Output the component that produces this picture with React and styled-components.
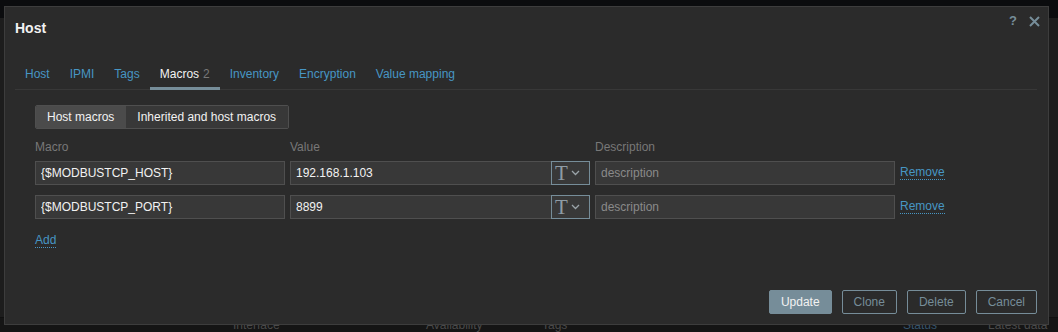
import React from "react";
import styled, { createGlobalStyle } from "styled-components";

const GlobalStyle = createGlobalStyle`
  html, body {
    margin: 0;
    padding: 0;
    background: #111213;
  }
  body {
    font-family: "Liberation Sans", Arial, sans-serif;
    font-size: 12px;
  }
`;

const Page = styled.div`
  position: relative;
  width: 1058px;
  height: 332px;
  overflow: hidden;
  background: #171717;
  display: flex;
  flex-direction: column;
`;

const TopBar = styled.div`
  height: 18px;
  background: #0b0c0e;
`;

const Behind = styled.div`
  height: 307px;
  background: #1d1d1d;
  border-bottom: 1px solid #101010;
  box-sizing: border-box;
`;

const TableHead = styled.div`
  display: flex;
  padding-left: 233px;
  line-height: 14px;
  background: #151515;
`;

const HeadCell = styled.span`
  width: ${(p) => p.$w}px;
  flex: none;
  color: ${(p) => (p.$sorted ? "#36546d" : "#4a4a4a")};
`;

const Dialog = styled.div`
  position: absolute;
  left: 4px;
  top: 6px;
  width: 1045px;
  height: 319px;
  box-sizing: border-box;
  background: #2b2b2b;
  border: 1px solid #3d3d3d;
  padding: 0 11px 10px 10px;
  display: flex;
  flex-direction: column;
`;

const Header = styled.div`
  display: flex;
  justify-content: space-between;
  align-items: flex-start;
  padding-top: 13px;
`;

const Title = styled.h4`
  margin: 0;
  font-size: 14px;
  line-height: 16px;
  font-weight: bold;
  color: #f2f2f2;
`;

const HeaderIcons = styled.div`
  display: flex;
  align-items: center;
  gap: 12px;
  margin-top: -6px;
  margin-right: -3px;
  color: #768d99;
`;

const HelpIcon = styled.span`
  font-size: 13px;
  line-height: 14px;
  font-weight: bold;
`;

const Tabs = styled.div`
  display: flex;
  margin-top: 24px;
  border-bottom: 1px solid #383838;
`;

const Tab = styled.a`
  padding: 7px 10px 6px;
  line-height: 14px;
  margin-bottom: -1px;
  border-bottom: 3px solid ${(p) => (p.$active ? "#768d99" : "transparent")};
  color: ${(p) => (p.$active ? "#f2f2f2" : "#4796c4")};
  cursor: pointer;
`;

const Count = styled.span`
  color: #787878;
  margin-left: 4px;
`;

const Panel = styled.div`
  padding: 15px 20px 0;
`;

const Segmented = styled.div`
  display: inline-flex;
  border: 1px solid #4f4f4f;
  border-radius: 2px;
  overflow: hidden;
`;

const Segment = styled.span`
  height: 22px;
  line-height: 22px;
  padding: 0 12px 0 11px;
  color: #f2f2f2;
  background: ${(p) => (p.$active ? "#4b4b4b" : "#383838")};
`;

const MacroGrid = styled.div`
  display: grid;
  grid-template-columns: 250px 300px 300px auto;
  column-gap: 5px;
  row-gap: 10px;
  align-items: center;
  margin-top: 11px;
`;

const ColLabel = styled.div`
  color: #787878;
  line-height: 14px;
  margin-bottom: -3px;
`;

const Input = styled.input`
  box-sizing: border-box;
  width: 100%;
  height: 24px;
  padding: 0 5px;
  margin: 0;
  background: #383838;
  border: 1px solid #4f4f4f;
  color: #f2f2f2;
  font-family: "Liberation Sans", Arial, sans-serif;
  font-size: 12px;
  outline: none;
  &::placeholder {
    color: #8a8a8a;
  }
`;

const ValueField = styled.div`
  display: flex;
`;

const TypeButton = styled.button`
  flex: none;
  width: 39px;
  height: 24px;
  margin-left: -1px;
  padding: 0 0 0 3px;
  box-sizing: border-box;
  display: flex;
  align-items: center;
  gap: 3px;
  background: #383838;
  border: 1px solid #768d99;
  color: #8e9ca5;
`;

const TypeGlyph = styled.span`
  font-family: "Liberation Serif", "Times New Roman", serif;
  font-size: 21px;
  line-height: 20px;
`;

const Link = styled.a`
  justify-self: start;
  color: #4796c4;
  line-height: 14px;
  margin-top: -2px;
  border-bottom: 1px dotted #4796c4;
  cursor: pointer;
`;

const AddLink = styled(Link)`
  display: inline-block;
  margin-top: 14px;
`;

const Footer = styled.div`
  margin-top: auto;
  display: flex;
  justify-content: flex-end;
  gap: 10px;
`;

const Button = styled.button`
  height: 24px;
  box-sizing: border-box;
  padding: 0 11px;
  border-radius: 2px;
  font-family: "Liberation Sans", Arial, sans-serif;
  font-size: 12px;
  border: 1px solid #768d99;
  background: ${(p) => (p.$primary ? "#768d99" : "transparent")};
  color: ${(p) => (p.$primary ? "#f2f2f2" : "#768d99")};
`;

const Chevron = () => (
  <svg width="9" height="6" viewBox="0 0 9 6" fill="none">
    <path d="M1 1l3.5 3.5L8 1" stroke="#9aa3a8" strokeWidth="1.3" />
  </svg>
);

const CloseIcon = () => (
  <svg width="11" height="11" viewBox="0 0 11 11" fill="none">
    <path d="M1 1l9 9M10 1l-9 9" stroke="#768d99" strokeWidth="2" />
  </svg>
);

const tabs = ["Host", "IPMI", "Tags", "Macros", "Inventory", "Encryption", "Value mapping"];

const macros = [
  { name: "{$MODBUSTCP_HOST}", value: "192.168.1.103" },
  { name: "{$MODBUSTCP_PORT}", value: "8899" },
];

const App = () => {
  return (
    <>
      <GlobalStyle />
      <Page>
        <TopBar />
        <Behind />
        <TableHead>
          <HeadCell $w={193}>Interface</HeadCell>
          <HeadCell $w={116}>Availability</HeadCell>
          <HeadCell $w={361}>Tags</HeadCell>
          <HeadCell $w={85} $sorted>Status</HeadCell>
          <HeadCell $w={80}>Latest data</HeadCell>
        </TableHead>

        <Dialog>
          <Header>
            <Title>Host</Title>
            <HeaderIcons>
              <HelpIcon>?</HelpIcon>
              <CloseIcon />
            </HeaderIcons>
          </Header>

          <Tabs>
            {tabs.map((t) => (
              <Tab key={t} $active={t === "Macros"}>
                {t}
                {t === "Macros" && <Count>2</Count>}
              </Tab>
            ))}
          </Tabs>

          <Panel>
            <Segmented>
              <Segment $active>Host macros</Segment>
              <Segment>Inherited and host macros</Segment>
            </Segmented>

            <MacroGrid>
              <ColLabel>Macro</ColLabel>
              <ColLabel>Value</ColLabel>
              <ColLabel>Description</ColLabel>
              <span />
              {macros.map((m) => (
                <React.Fragment key={m.name}>
                  <Input defaultValue={m.name} />
                  <ValueField>
                    <Input defaultValue={m.value} />
                    <TypeButton>
                      <TypeGlyph>T</TypeGlyph>
                      <Chevron />
                    </TypeButton>
                  </ValueField>
                  <Input placeholder="description" />
                  <Link>Remove</Link>
                </React.Fragment>
              ))}
            </MacroGrid>
            <AddLink>Add</AddLink>
          </Panel>

          <Footer>
            <Button $primary>Update</Button>
            <Button>Clone</Button>
            <Button>Delete</Button>
            <Button>Cancel</Button>
          </Footer>
        </Dialog>
      </Page>
    </>
  );
};

export default App;
